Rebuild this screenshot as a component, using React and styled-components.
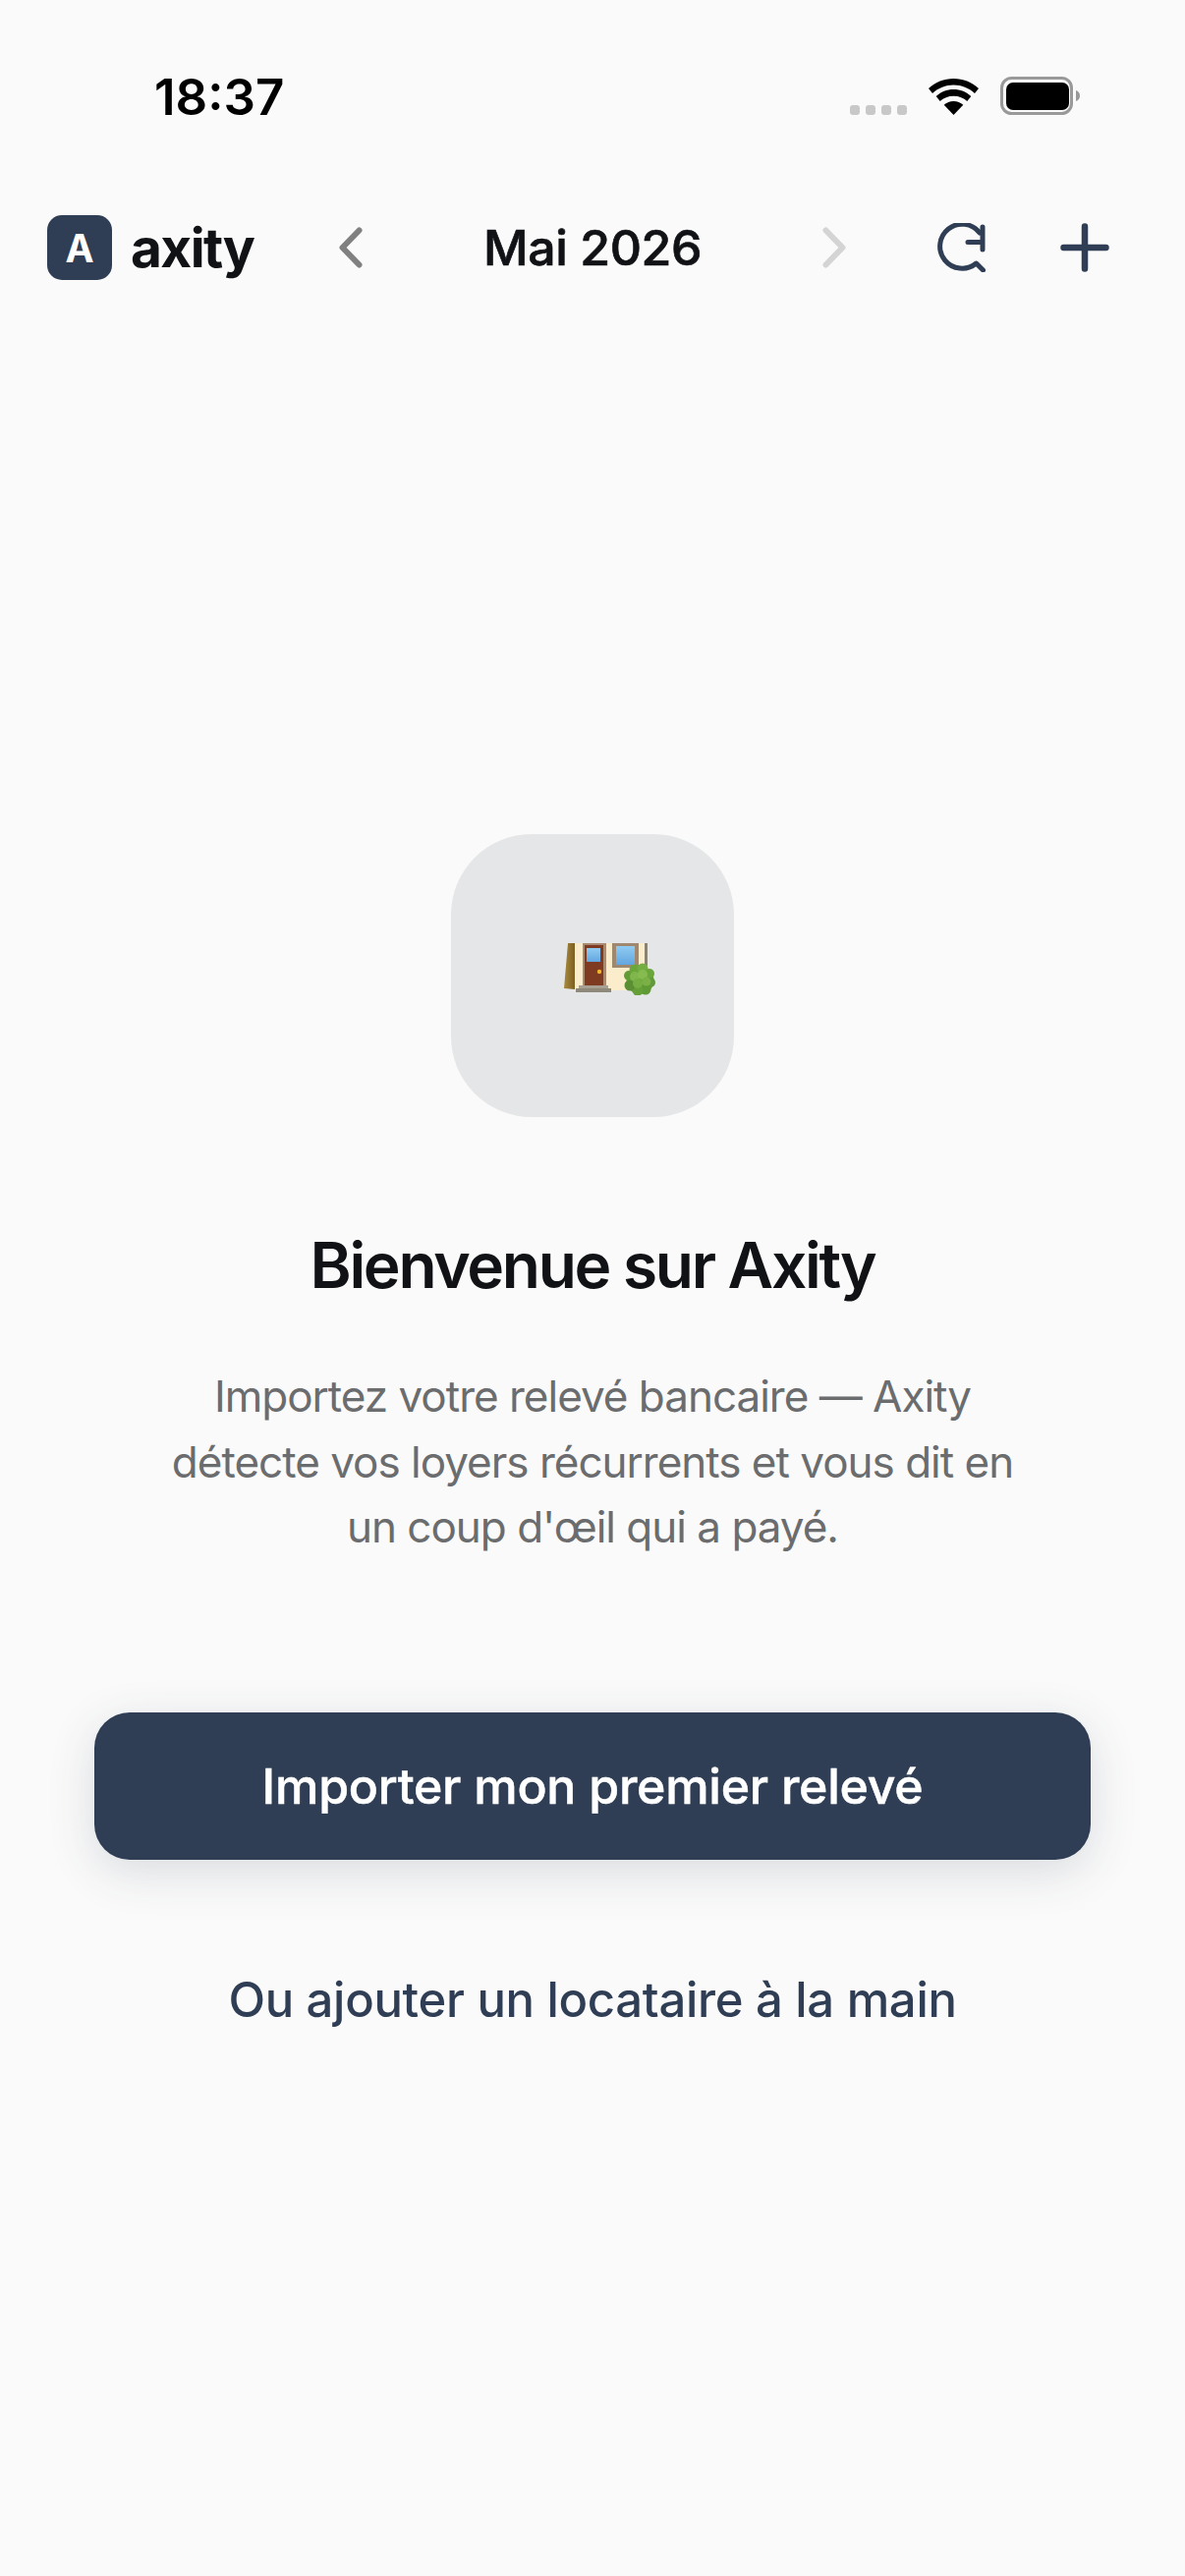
import React from "react";
import styled, { createGlobalStyle } from "styled-components";

const Global = createGlobalStyle`
  html, body { margin: 0; padding: 0; background: #fafafa; }
  * { box-sizing: border-box; }
`;
const Page = styled.div`
  width: 1206px; height: 2622px; background: #fafafa; overflow: hidden;
  font-family: Inter, "Noto Sans", sans-serif; display: flex; flex-direction: column;
`;
const StatusBar = styled.div`
  height: 117px; padding: 70px 106px 0 157px; display: flex; justify-content: space-between; align-items: flex-end;
`;
const Clock = styled.div`
  font-size: 51px; line-height: 37px; font-weight: 600; color: #000;
`;
const StatusIcons = styled.div`display: flex; align-items: flex-end; gap: 22px;`;
const Dots = styled.div`display: flex; gap: 6px;`;
const Dot = styled.span`width: 10px; height: 10px; border-radius: 3px; background: #c8c8c8;`;
const TopBar = styled.div`
  margin-top: 102px; height: 66px; padding-left: 48px; display: flex; align-items: center;
`;
const LogoBox = styled.div`
  width: 66px; height: 66px; border-radius: 15px; background: #2f3e55; color: #fff;
  display: flex; align-items: center; justify-content: center; font-weight: 700; font-size: 39px;
`;
const Wordmark = styled.div`
  margin-left: 19px; width: 212px; font-size: 55px; font-weight: 700; letter-spacing: -1.6px; color: #111215; line-height: 66px;
`;
const Chevron = styled.svg`display: block; flex: none;`;
const Month = styled.div`
  width: 468px; text-align: center; font-size: 50px; font-weight: 500; letter-spacing: -0.4px; -webkit-text-stroke: 0.7px #111215; color: #111215; line-height: 66px;
`;
const Tool = styled.svg`display: block; flex: none; margin-left: ${p => p.$ml}px;`;
const Main = styled.div`display: flex; flex-direction: column; align-items: center; padding-top: 564px;`;
const IconTile = styled.div`
  width: 288px; height: 288px; border-radius: 82px; background: #e5e6e8; display: flex; align-items: center; justify-content: center;
`;
const Title = styled.h1`
  margin: 111px 0 0; font-size: 64px; line-height: 80px; font-weight: 600; letter-spacing: -2.3px; color: #111215;
`;
const Lead = styled.p`
  margin: 60px 0 0; width: 900px; text-align: center; font-size: 44px; line-height: 66.5px; font-weight: 400; letter-spacing: -1px; color: #6b6c6e;
`;
const Primary = styled.button`
  margin-top: 155px; width: 1014px; height: 150px; border: 0; border-radius: 36px; background: #2f3e55; color: #fff;
  font: 500 50px/58px Inter, sans-serif; letter-spacing: -0.25px; -webkit-text-stroke: 0.5px #fff; box-shadow: 0 12px 48px rgba(47,62,85,.16);
`;
const Secondary = styled.button`
  margin-top: 114px; border: 0; background: none; padding: 0; color: #2f3e55; font: 500 49px/58px Inter, sans-serif; letter-spacing: -0.3px;
`;

const lobes = [
  [77.5, 38, 14, "#6aa53b"],
  [66, 33, 5, "#639c36"], [72, 27, 5.5, "#6ba63b"], [80, 26, 5.5, "#74ae42"], [87, 31, 5, "#6ba63b"],
  [88, 40, 5, "#62993a"], [83, 47, 5.5, "#5f9a35"], [75, 48, 5.5, "#649f38"], [67, 43, 5.5, "#5c8f34"],
  [72, 34, 5, "#80b64b"], [80, 32, 5, "#86bb50"], [84, 39, 4.5, "#7ab046"], [75, 41, 5, "#76ae44"],
];

const House = () => (
  <svg width="93" height="53" viewBox="0 0 93 53" style={{ marginLeft: 34, marginBottom: 14 }}>
    <defs>
      <linearGradient id="tr" x1="0" x2="1"><stop offset="0" stopColor="#a88a3c" /><stop offset="1" stopColor="#7d5f22" /></linearGradient>
      <linearGradient id="gl" x1="0" y1="0" x2="0" y2="1"><stop offset="0" stopColor="#8fcbf2" /><stop offset="1" stopColor="#63a6df" /></linearGradient>
    </defs>
    <rect x="11" y="0" width="74" height="48" fill="#fbeccb" />
    <path d="M4 0h7v47l-11-1z" fill="url(#tr)" />
    <rect x="19" y="0" width="24" height="43" fill="#a98a70" />
    <rect x="21" y="2" width="19" height="41" fill="#7e3b22" />
    <rect x="23" y="5" width="14" height="14" fill="url(#gl)" />
    <circle cx="36" cy="29" r="2.2" fill="#f1b52c" />
    <rect x="15" y="43" width="30" height="3" fill="#a8a193" />
    <rect x="12" y="46" width="36" height="4" fill="#8f897c" />
    <rect x="49" y="0" width="27" height="25" fill="#a08870" />
    <rect x="53" y="3" width="19" height="19" fill="url(#gl)" />
    <rect x="82" y="0" width="3" height="23" fill="#8a8272" />
    {lobes.map(([cx, cy, r, fill]) => <circle key={`${cx}-${cy}`} cx={cx} cy={cy} r={r} fill={fill} />)}
  </svg>
);

export default function App() {
  return (
    <Page>
      <Global />
      <StatusBar>
        <Clock>18:37</Clock>
        <StatusIcons>
          <Dots><Dot /><Dot /><Dot /><Dot /></Dots>
          <svg width="51" height="37" viewBox="0 0 51 37">
            <path d="M25.5 0C16 0 7 3.6 0 10l4 5C10 9.5 17.5 6.5 25.5 6.5S41 9.5 47 15l4-5C44 3.6 35 0 25.5 0z" fill="#000" />
            <path d="M25.5 11c-6.8 0-13 2.5-17.8 7l4 5c3.6-3.3 8.4-5.3 13.8-5.3s10.200 2 13.800 5.300l4-5C38.500 13.500 32.300 11 25.500 11z" fill="#000" />
            <path d="M25.500 23c-3.800 0-7 1.300-9.800 3.800L25.500 37l9.800-10.200C32.500 24.300 29.300 23 25.500 23z" fill="#000" />
          </svg>
          <svg width="82" height="39" viewBox="0 0 82 39">
            <rect x="1.500" y="1.500" width="71" height="36" rx="10" fill="none" stroke="#999" strokeWidth="3" />
            <rect x="6" y="6" width="64" height="28" rx="7" fill="#000" />
            <path d="M77 14c2.500.6 4 2.800 4 5.500S79.500 24.400 77 25z" fill="#999" />
          </svg>
        </StatusIcons>
      </StatusBar>
      <TopBar>
        <LogoBox>A</LogoBox>
        <Wordmark>axity</Wordmark>
        <Chevron width="24" height="42" viewBox="0 0 24 42">
          <path d="M20.500 3.500 3.500 21l17 17.500" fill="none" stroke="#808080" strokeWidth="6" strokeLinecap="round" strokeLinejoin="round" />
        </Chevron>
        <Month>Mai 2026</Month>
        <Chevron width="24" height="42" viewBox="0 0 24 42">
          <path d="M3.500 3.500 20.500 21l-17 17.500" fill="none" stroke="#d4d4d4" strokeWidth="6" strokeLinecap="round" strokeLinejoin="round" />
        </Chevron>
        <Tool $ml={92} width="50" height="50" viewBox="0 0 50 50">
          <path d="M44 10A22.500 22.500 0 1 0 40.500 41L47.500 48" fill="none" stroke="#2f3e55" strokeWidth="5" strokeLinecap="round" strokeLinejoin="round" />
          <path d="M47 4V27M32 19.500H47" fill="none" stroke="#2f3e55" strokeWidth="5" strokeLinecap="round" />
        </Tool>
        <Tool $ml={76} width="50" height="50" viewBox="0 0 50 50">
          <path d="M25 3.500v43M3.500 25h43" fill="none" stroke="#2f3e55" strokeWidth="6.500" strokeLinecap="round" />
        </Tool>
      </TopBar>
      <Main>
        <IconTile><House /></IconTile>
        <Title>Bienvenue sur Axity</Title>
        <Lead>
          Importez votre relevé bancaire — Axity<br />
          détecte vos loyers récurrents et vous dit en<br />
          un coup d'œil qui a payé.
        </Lead>
        <Primary>Importer mon premier relevé</Primary>
        <Secondary>Ou ajouter un locataire à la main</Secondary>
      </Main>
    </Page>
  );
}
